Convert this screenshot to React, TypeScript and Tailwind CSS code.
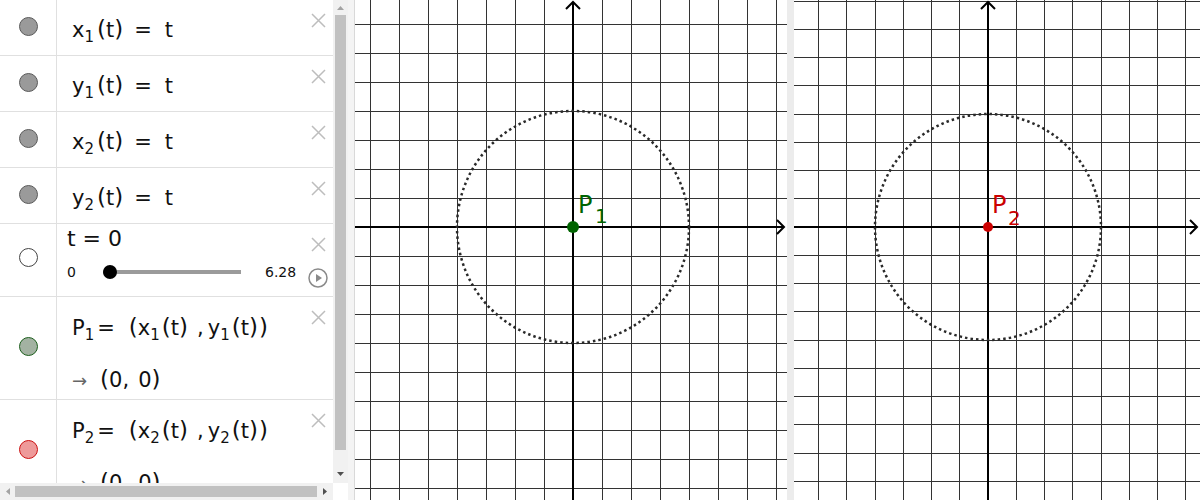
import React from "react";

const H = 500;

type GraphProps = {
  width: number;
  ox: number;
  oy: number;
  step: number;
  pointColor: string;
  pointR: number;
  sub: string;
  px: number;
  subX: number;
  subY: number;
};

const GraphView: React.FC<GraphProps> = ({
  width,
  ox,
  oy,
  step,
  pointColor,
  pointR,
  sub,
  px,
  subX,
  subY,
}) => {
  const xs: number[] = [];
  for (let k = Math.ceil(-ox / step); ox + k * step <= width; k++) {
    if (k !== 0) xs.push(Math.floor(ox + k * step) + 0.5);
  }
  const ys: number[] = [];
  for (let k = Math.ceil(-oy / step); oy + k * step <= H; k++) {
    if (k !== 0) ys.push(Math.floor(oy + k * step) + 0.5);
  }

  return (
    <svg width={width} height={H} className="block shrink-0 bg-white">
      <g stroke="#333" strokeWidth={1.2} shapeRendering="crispEdges">
        {xs.map((x) => (
          <line key={"v" + x} x1={x} y1={0} x2={x} y2={H} />
        ))}
        {ys.map((y) => (
          <line key={"h" + y} x1={0} y1={y} x2={width} y2={y} />
        ))}
      </g>
      <g stroke="#000" strokeWidth={2} fill="none">
        <line x1={0} y1={oy} x2={width - 3} y2={oy} />
        <line x1={ox} y1={2} x2={ox} y2={H} />
        <polyline
          points={`${width - 10},${oy - 7} ${width - 3},${oy} ${width - 10},${oy + 7}`}
        />
        <polyline points={`${ox - 7},9 ${ox},2 ${ox + 7},9`} />
      </g>
      <circle
        cx={ox}
        cy={oy}
        r={step * 4}
        fill="none"
        stroke="#2a2a2a"
        strokeWidth={2.5}
        strokeDasharray="2.5 3"
      />
      <circle cx={ox} cy={oy} r={pointR} fill={pointColor} />
      <text
        x={px}
        y={213}
        fill={pointColor}
        fontFamily="'DejaVu Sans', sans-serif"
        fontSize={24}
      >
        P
      </text>
      <text
        x={subX}
        y={subY}
        fill={pointColor}
        fontFamily="'DejaVu Sans', sans-serif"
        fontSize={20}
      >
        {sub}
      </text>
    </svg>
  );
};

const Sub: React.FC<{ children: React.ReactNode }> = ({ children }) => (
  <span className="relative top-[5px] text-[15px]">{children}</span>
);

const Close = () => (
  <svg width="15" height="15" viewBox="0 0 15 15" className="block">
    <path d="M1 1L14 14M14 1L1 14" stroke="#bdbdbd" strokeWidth="1.5" />
  </svg>
);

const Marble: React.FC<{ kind: "gray" | "white" | "green" | "red"; top: string }> = ({
  kind,
  top,
}) => {
  const styles = {
    gray: "bg-[#9a9a9a] border-[#5a5a5a]",
    white: "bg-white border-[#444]",
    green: "bg-[#a3b2a2] border-[#1d5e1d]",
    red: "bg-[#ee9a9a] border-[#cc1111]",
  };
  return (
    <div className="w-[57px] shrink-0 border-r border-[#e0e0e0] flex justify-center">
      <div className={`w-[19px] h-[19px] rounded-full border ${styles[kind]} ${top}`} />
    </div>
  );
};

const FuncRow: React.FC<{ v: string; n: string }> = ({ v, n }) => (
  <div className="flex h-[56px] shrink-0 border-b border-[#e0e0e0]">
    <Marble kind="gray" top="mt-[17px]" />
    <div className="flex-1 pl-[15px] pt-[17px]">
      <div className="flex items-baseline text-[21px] leading-[24px]">
        <span>{v}</span>
        <Sub>{n}</Sub>
        <span className="ml-[3px] text-[23px]">(</span>
        <span>t</span>
        <span className="text-[23px]">)</span>
        <span className="ml-[11px]">=</span>
        <span className="ml-[13px]">t</span>
      </div>
    </div>
    <div className="w-[20px] mr-[5px] pt-[13px] flex justify-center">
      <Close />
    </div>
  </div>
);

const PointRow: React.FC<{ n: string; kind: "green" | "red" }> = ({ n, kind }) => (
  <div className="flex h-[103px] shrink-0 border-b border-[#e0e0e0]">
    <Marble kind={kind} top="mt-[40px]" />
    <div className="flex-1 pl-[15px] pt-[18px]">
      <div className="flex items-baseline text-[21px] leading-[24px]">
        <span>P</span>
        <Sub>{n}</Sub>
        <span className="ml-[3px]">=</span>
        <span className="ml-[14px] text-[23px]">(</span>
        <span>x</span>
        <Sub>{n}</Sub>
        <span className="ml-[2px] text-[23px]">(</span>
        <span>t</span>
        <span className="text-[23px]">)</span>
        <span className="ml-[9px]">,</span>
        <span className="ml-[4px]">y</span>
        <Sub>{n}</Sub>
        <span className="ml-[2px] text-[23px]">(</span>
        <span>t</span>
        <span className="text-[23px]">)</span>
        <span className="ml-[1px] text-[23px]">)</span>
      </div>
      <div className="flex items-baseline text-[21px] leading-[24px] mt-[25px]">
        <span className="text-[18px] text-[#666]">→</span>
        <span className="ml-[13px] text-[23px]">(</span>
        <span>0,</span>
        <span className="ml-[9px]">0</span>
        <span className="text-[23px]">)</span>
      </div>
    </div>
    <div className="w-[20px] mr-[5px] pt-[13px] flex justify-center">
      <Close />
    </div>
  </div>
);

const SliderRow = () => (
  <div className="flex h-[73px] shrink-0 border-b border-[#e0e0e0]">
    <Marble kind="white" top="mt-[24px]" />
    <div className="flex-1 flex flex-col pl-[10px] pt-[2px]">
      <div className="text-[22px] leading-[26px]">t = 0</div>
      <div className="flex items-center h-[14px] mt-[13px] text-[14px] leading-[14px]">
        <span className="w-[36px]">0</span>
        <div className="relative w-[138px] h-[14px] flex items-center">
          <div className="w-full h-[4px] bg-[#9b9b9b]" />
          <div className="absolute left-0 top-0 w-[14px] h-[14px] rounded-full bg-black" />
        </div>
        <span className="ml-[24px]">6.28</span>
      </div>
    </div>
    <div className="w-[20px] mr-[5px] pt-[13px] flex flex-col items-center">
      <Close />
      <svg width="20" height="20" viewBox="0 0 20 20" className="block mt-[16px]">
        <circle cx="10" cy="10" r="9" fill="none" stroke="#8a8a8a" strokeWidth="1.5" />
        <path d="M8 6L14 10L8 14Z" fill="#8a8a8a" />
      </svg>
    </div>
  </div>
);

const Tri: React.FC<{ dir: "up" | "down" | "left" | "right"; color: string }> = ({
  dir,
  color,
}) => {
  const d = {
    up: "M0 5L3.5 1L7 5Z",
    down: "M0 1L3.5 5L7 1Z",
    left: "M5 0L1 3.5L5 7Z",
    right: "M1 0L5 3.5L1 7Z",
  }[dir];
  const size = dir === "up" || dir === "down" ? { w: 7, h: 6 } : { w: 6, h: 7 };
  return (
    <svg width={size.w} height={size.h} viewBox={`0 0 ${size.w} ${size.h}`} className="block">
      <path d={d} fill={color} />
    </svg>
  );
};

const AlgebraView = () => (
  <div className="w-[348px] h-[500px] shrink-0 flex flex-col bg-white text-[#111] font-['DejaVu_Sans',sans-serif]">
    <div className="flex h-[483px]">
      <div className="w-[333px] h-[483px] overflow-hidden flex flex-col">
        <FuncRow v="x" n="1" />
        <FuncRow v="y" n="1" />
        <FuncRow v="x" n="2" />
        <FuncRow v="y" n="2" />
        <SliderRow />
        <PointRow n="1" kind="green" />
        <PointRow n="2" kind="red" />
      </div>
      <div className="w-[15px] h-[483px] bg-[#f1f1f1] flex flex-col items-center">
        <div className="h-[15px] flex items-center justify-center">
          <Tri dir="up" color="#a3a3a3" />
        </div>
        <div className="w-[11px] h-[435px] bg-[#c1c1c1]" />
        <div className="flex-1 flex items-end justify-center pb-[6px]">
          <Tri dir="down" color="#505050" />
        </div>
      </div>
    </div>
    <div className="flex h-[17px]">
      <div className="w-[333px] bg-[#f1f1f1] flex items-center">
        <div className="w-[15px] flex justify-center">
          <Tri dir="left" color="#a3a3a3" />
        </div>
        <div className="w-[302px] h-[11px] bg-[#c1c1c1]" />
        <div className="flex-1 flex justify-center">
          <Tri dir="right" color="#505050" />
        </div>
      </div>
      <div className="w-[15px] bg-white" />
    </div>
  </div>
);

export default function App() {
  return (
    <div className="flex w-[1200px] h-[500px] overflow-hidden bg-white">
      <AlgebraView />
      <div className="w-[7px] shrink-0 bg-[#f4f4f4] border-r border-[#d9d9d9]" />
      <GraphView
        width={432}
        ox={218}
        oy={227}
        step={29}
        pointColor="#006400"
        pointR={6}
        sub="1"
        px={223}
        subX={240}
        subY={223}
      />
      <div className="w-[7px] shrink-0 bg-[#ececec]" />
      <GraphView
        width={406}
        ox={194}
        oy={227}
        step={28.25}
        pointColor="#cc0000"
        pointR={5}
        sub="2"
        px={198}
        subX={214}
        subY={225}
      />
    </div>
  );
}
